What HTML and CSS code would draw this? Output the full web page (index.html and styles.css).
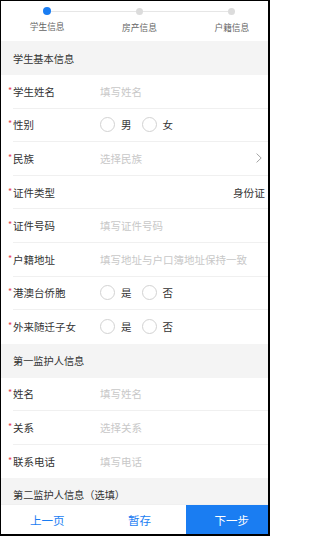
FILE: index.html
```html
<!DOCTYPE html>
<html lang="zh-CN">
<head>
<meta charset="utf-8">
<title>学生信息</title>
<link rel="stylesheet" href="styles.css">
</head>
<body>
<div class="frame">
  <div class="app">
    <div class="content">
      <div class="stepper">
        <div class="step active"><span class="dot"></span><span class="step-label">学生信息</span></div>
        <div class="step"><span class="dot"></span><span class="step-label">房产信息</span></div>
        <div class="step"><span class="dot"></span><span class="step-label">户籍信息</span></div>
      </div>

      <div class="section">学生基本信息</div>
      <div class="row"><span class="req">*</span><span class="label">学生姓名</span><span class="field ph">填写姓名</span></div>
      <div class="row"><span class="req">*</span><span class="label">性别</span>
        <span class="field radios"><span class="radio"></span><span class="opt">男</span><span class="radio"></span><span class="opt">女</span></span></div>
      <div class="row"><span class="req">*</span><span class="label">民族</span><span class="field ph">选择民族</span>
        <svg class="chev" width="6" height="10" viewBox="0 0 6 10"><path d="M0.6 0.6 L5.2 5 L0.6 9.4" fill="none" stroke="#9a9a9a" stroke-width="0.9"/></svg></div>
      <div class="row"><span class="req">*</span><span class="label">证件类型</span><span class="field"></span><span class="value">身份证</span></div>
      <div class="row"><span class="req">*</span><span class="label">证件号码</span><span class="field ph">填写证件号码</span></div>
      <div class="row"><span class="req">*</span><span class="label">户籍地址</span><span class="field ph">填写地址与户口簿地址保持一致</span></div>
      <div class="row"><span class="req">*</span><span class="label">港澳台侨胞</span>
        <span class="field radios"><span class="radio"></span><span class="opt">是</span><span class="radio"></span><span class="opt">否</span></span></div>
      <div class="row last"><span class="req">*</span><span class="label">外来随迁子女</span>
        <span class="field radios"><span class="radio"></span><span class="opt">是</span><span class="radio"></span><span class="opt">否</span></span></div>

      <div class="section">第一监护人信息</div>
      <div class="row g"><span class="req">*</span><span class="label">姓名</span><span class="field ph">填写姓名</span></div>
      <div class="row g"><span class="req">*</span><span class="label">关系</span><span class="field ph">选择关系</span></div>
      <div class="row g last"><span class="req">*</span><span class="label">联系电话</span><span class="field ph">填写电话</span></div>

      <div class="section">第二监护人信息（选填）</div>
    </div>
    <div class="footer">
      <button class="btn">上一页</button>
      <button class="btn">暂存</button>
      <button class="btn primary">下一步</button>
    </div>
  </div>
</div>
</body>
</html>
```

FILE: styles.css
```css
* { box-sizing: border-box; }
html, body { margin: 0; padding: 0; background: #fff; }
body {
  font-family: "Noto Sans CJK SC", "Noto Sans", sans-serif;
  color: #333;
}
.frame {
  width: 270px;
  height: 536px;
  border-style: solid;
  border-color: #000;
  border-width: 1px 2px 2px 1px;
  overflow: hidden;
  background: #fff;
}
.app {
  width: 277px;
  height: 533px;
  display: flex;
  flex-direction: column;
  background: #fff;
}
.content {
  flex: 1;
  overflow: hidden;
}
.stepper {
  position: relative;
  display: grid;
  grid-template-columns: repeat(3, 1fr);
  height: 40px;
  padding-top: 6px;
}
.stepper::before {
  content: "";
  position: absolute;
  left: 16.67%;
  right: 16.67%;
  top: 9.5px;
  height: 1.5px;
  background: #e6e6e6;
}
.step {
  display: flex;
  flex-direction: column;
  align-items: center;
  position: relative;
}
.dot {
  width: 7px;
  height: 7px;
  margin-top: 0.5px;
  border-radius: 50%;
  background: #dcdcdc;
}
.step.active .dot {
  width: 8px;
  height: 8px;
  margin-top: 0;
  background: #1a7df2;
}
.step-label {
  margin-top: 7px;
  font-size: 8.7px;
  line-height: 12px;
  color: #666;
}
.step.active .step-label { margin-top: 6px; }
.section {
  height: 34px;
  display: flex;
  align-items: center;
  padding-left: 12px;
  background: #f4f4f4;
  font-size: 10.2px;
  color: #333;
}
.row {
  height: 33.6px;
  margin-left: 12px;
  padding-right: 13px;
  display: flex;
  align-items: center;
  border-bottom: 1px solid #f0f0f0;
  font-size: 10.5px;
}
.row.g { height: 33.4px; }
.row.last { border-bottom: none; }
.req {
  width: 5px;
  margin-left: -5px;
  color: #e5404f;
  font-size: 9px;
  line-height: 1;
  align-self: center;
  position: relative;
  top: -1px;
}
.label {
  width: 87px;
  color: #333;
  white-space: nowrap;
}
.field {
  flex: 1;
  white-space: nowrap;
}
.ph { color: #c8c8c8; }
.value { color: #333; font-size: 10.7px; }
.chev { margin-right: 3px; }
.radios {
  display: flex;
  align-items: center;
}
.radio {
  width: 15px;
  height: 15px;
  border: 1px solid #d2d2d2;
  border-radius: 50%;
  margin-right: 6px;
}
.opt {
  margin-right: 10px;
  color: #333;
}
.footer {
  height: 30px;
  display: grid;
  grid-template-columns: repeat(3, 1fr);
  background: #fff;
  border-top: 1px solid #f0f0f0;
}
.btn {
  border: none;
  background: #fff;
  color: #1a7df2;
  font-family: inherit;
  font-size: 11.5px;
  padding: 0;
}
.btn.primary {
  background: #1a7df2;
  color: #fff;
}
```
